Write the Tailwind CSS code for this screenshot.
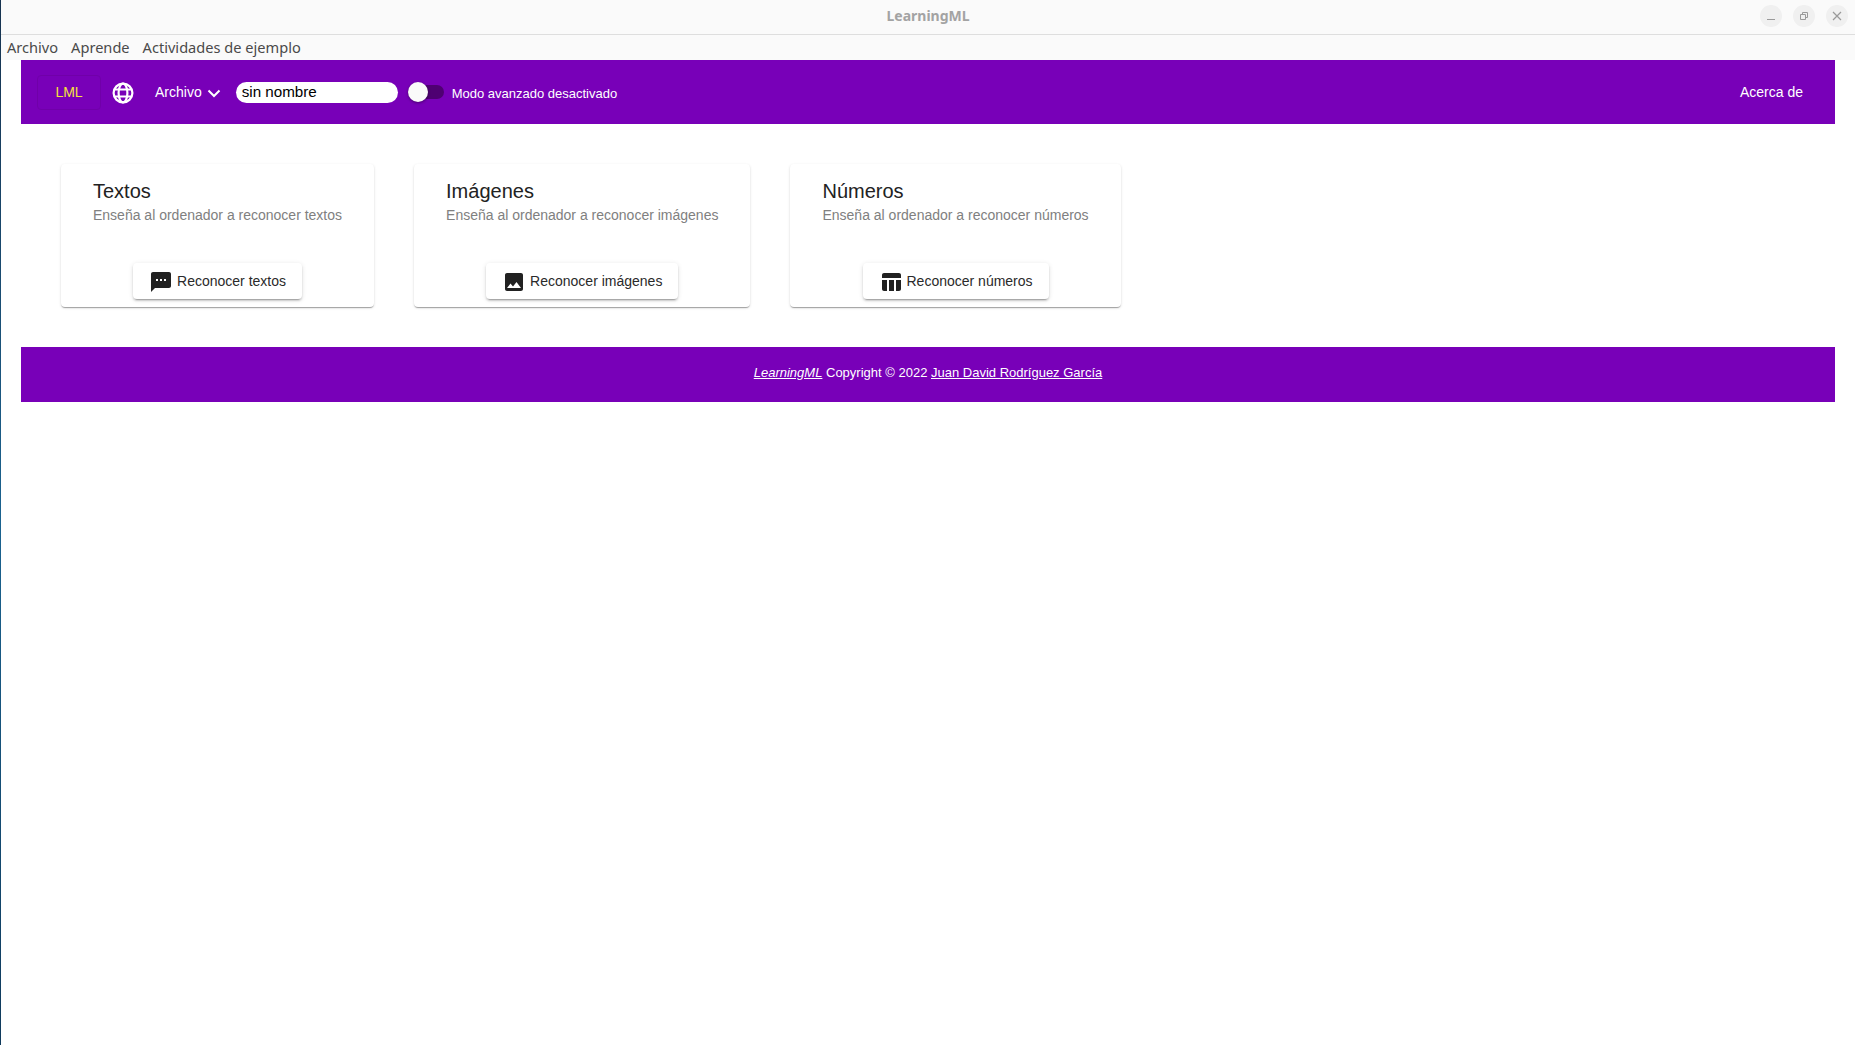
<!DOCTYPE html>
<html lang="es">
<head>
  <meta charset="UTF-8">
  <title>LearningML</title>
  <script src="https://cdn.jsdelivr.net/npm/@tailwindcss/browser@4"></script>
</head>
<body class="bg-white">
  <div class="flex h-[1045px] w-[1855px] overflow-hidden font-['Liberation_Sans',sans-serif]">
    <!-- desktop sliver behind the window -->
    <div class="h-full w-px shrink-0 bg-gradient-to-b from-[#16324f] via-[#1a6390] to-[#103a5c]"></div>

    <div class="min-w-0 flex-1">
      <!-- title bar -->
      <div class="relative flex h-[35px] items-center justify-center border-b border-[#dedede] bg-[#fafafa] pb-[2px]">
        <span class="font-['Noto_Sans',sans-serif] text-sm font-bold text-[#a3a3a3]">LearningML</span>
        <div class="absolute top-[5px] right-[7px] flex gap-[11px]">
          <div class="flex h-[22px] w-[22px] items-center justify-center rounded-full bg-[#f0f0f0]">
            <svg class="h-3 w-3" viewBox="0 0 12 12"><path d="M2 9.5h8" stroke="#9a9a9a" stroke-width="1"/></svg>
          </div>
          <div class="flex h-[22px] w-[22px] items-center justify-center rounded-full bg-[#f0f0f0]">
            <svg class="h-3 w-3" viewBox="0 0 12 12" fill="none" stroke="#9a9a9a" stroke-width="1"><path d="M2.5 4.5h5v5h-5z"/><path d="M4.5 4.5v-2h5v5h-2"/></svg>
          </div>
          <div class="flex h-[22px] w-[22px] items-center justify-center rounded-full bg-[#f0f0f0]">
            <svg class="h-3 w-3" viewBox="0 0 12 12" fill="none" stroke="#9a9a9a" stroke-width="1.2"><path d="M2 2l8 8M10 2l-8 8"/></svg>
          </div>
        </div>
      </div>

      <!-- app menu -->
      <div class="flex h-[25px] items-center gap-[13px] bg-[#fafafa] pl-[6px] font-['Noto_Sans',sans-serif] text-[14.6px] text-[#4a4a4a]">
        <span>Archivo</span>
        <span>Aprende</span>
        <span>Actividades de ejemplo</span>
      </div>

      <div class="px-5">
        <!-- header -->
        <div class="flex h-16 items-center bg-[#7800b8] text-sm text-white">
          <div class="ml-4 flex h-[35px] w-16 items-center justify-center rounded border border-[#7000a9] text-[#f5e23a]">LML</div>
          <svg class="mt-[1px] ml-[11px] h-[22px] w-[22px]" viewBox="0 0 22 22" fill="none" stroke="white" stroke-width="2.2">
            <circle cx="11" cy="11" r="9.4"/>
            <ellipse cx="11" cy="11" rx="4.4" ry="9.4"/>
            <path d="M2 7.5h18M2 14.5h18"/>
          </svg>
          <span class="ml-[21px]">Archivo</span>
          <svg class="mt-[1px] ml-[5px] h-[14px] w-[14px]" viewBox="0 0 14 14" fill="none" stroke="white" stroke-width="2"><path d="M1.5 4.5L7 10l5.5-5.5"/></svg>
          <div class="ml-[15px] flex h-[21px] w-[162px] items-center rounded-full bg-white pl-[6px] text-[15.2px] text-black">sin nombre</div>
          <div class="relative ml-[10px] h-[14px] w-[36px] rounded-full bg-[#4e0072]">
            <div class="absolute top-[-3px] left-0 h-5 w-5 rounded-full bg-[#fafafa] shadow-[0_1px_3px_rgba(0,0,0,0.4)]"></div>
          </div>
          <span class="mt-[4px] ml-[8px] text-[13px]">Modo avanzado desactivado</span>
          <span class="mr-8 ml-auto">Acerca de</span>
        </div>

        <!-- cards -->
        <div class="flex gap-10 px-10 py-10">
          <div class="flex h-[143px] flex-col rounded bg-white px-8 pt-[15px] shadow-[0_2px_1px_-1px_rgba(0,0,0,0.2),0_1px_1px_0_rgba(0,0,0,0.14),0_1px_3px_0_rgba(0,0,0,0.12)]">
            <h2 class="text-xl leading-[24px] text-[#222]">Textos</h2>
            <p class="text-sm leading-[24px] text-[#808080]">Enseña al ordenador a reconocer textos</p>
            <button class="mx-auto mt-[36px] flex h-9 items-center gap-1 rounded bg-white px-4 text-sm text-[#2a2a2a] shadow-[0_3px_1px_-2px_rgba(0,0,0,0.2),0_2px_2px_0_rgba(0,0,0,0.14),0_1px_5px_0_rgba(0,0,0,0.12)]">
              <svg class="mt-[1px] h-6 w-6 fill-[#212121]" viewBox="0 0 24 24"><path d="M20 2H4c-1.1 0-1.99.9-1.99 2L2 22l4-4h14c1.1 0 2-.9 2-2V4c0-1.1-.9-2-2-2zM9 11H7V9h2v2zm4 0h-2V9h2v2zm4 0h-2V9h2v2z"/></svg>
              Reconocer textos
            </button>
          </div>

          <div class="flex h-[143px] flex-col rounded bg-white px-8 pt-[15px] shadow-[0_2px_1px_-1px_rgba(0,0,0,0.2),0_1px_1px_0_rgba(0,0,0,0.14),0_1px_3px_0_rgba(0,0,0,0.12)]">
            <h2 class="text-xl leading-[24px] text-[#222]">Imágenes</h2>
            <p class="text-sm leading-[24px] text-[#808080]">Enseña al ordenador a reconocer imágenes</p>
            <button class="mx-auto mt-[36px] flex h-9 items-center gap-1 rounded bg-white px-4 text-sm text-[#2a2a2a] shadow-[0_3px_1px_-2px_rgba(0,0,0,0.2),0_2px_2px_0_rgba(0,0,0,0.14),0_1px_5px_0_rgba(0,0,0,0.12)]">
              <svg class="mt-[1px] h-6 w-6 fill-[#212121]" viewBox="0 0 24 24"><path d="M21 19V5c0-1.1-.9-2-2-2H5c-1.1 0-2 .9-2 2v14c0 1.1.9 2 2 2h14c1.1 0 2-.9 2-2zM8.5 13.5l2.5 3.01L14.5 12l4.5 6H5l3.5-4.5z"/></svg>
              Reconocer imágenes
            </button>
          </div>

          <div class="flex h-[143px] flex-col rounded bg-white px-8 pt-[15px] shadow-[0_2px_1px_-1px_rgba(0,0,0,0.2),0_1px_1px_0_rgba(0,0,0,0.14),0_1px_3px_0_rgba(0,0,0,0.12)]">
            <h2 class="text-xl leading-[24px] text-[#222]">Números</h2>
            <p class="text-sm leading-[24px] text-[#808080]">Enseña al ordenador a reconocer números</p>
            <button class="mx-auto mt-[36px] flex h-9 items-center gap-1 rounded bg-white px-4 text-sm text-[#2a2a2a] shadow-[0_3px_1px_-2px_rgba(0,0,0,0.2),0_2px_2px_0_rgba(0,0,0,0.14),0_1px_5px_0_rgba(0,0,0,0.12)]">
              <svg class="mt-[1px] h-6 w-6 fill-[#212121]" viewBox="0 0 24 24"><path d="M10 10.02h5V21h-5zM17 21h3c1.1 0 2-.9 2-2v-9h-5v11zm3-18H5c-1.1 0-2 .9-2 2v3h19V5c0-1.1-.9-2-2-2zM3 19c0 1.1.9 2 2 2h3V10H3v9z"/></svg>
              Reconocer números
            </button>
          </div>
        </div>

        <!-- footer -->
        <div class="h-[55px] bg-[#7800b8] pt-[17px] text-center text-[13px] leading-[17px] text-white">
          <a href="#" class="italic underline">LearningML</a> Copyright © 2022 <a href="#" class="underline">Juan David Rodríguez García</a>
        </div>
      </div>
    </div>
  </div>
</body>
</html>
